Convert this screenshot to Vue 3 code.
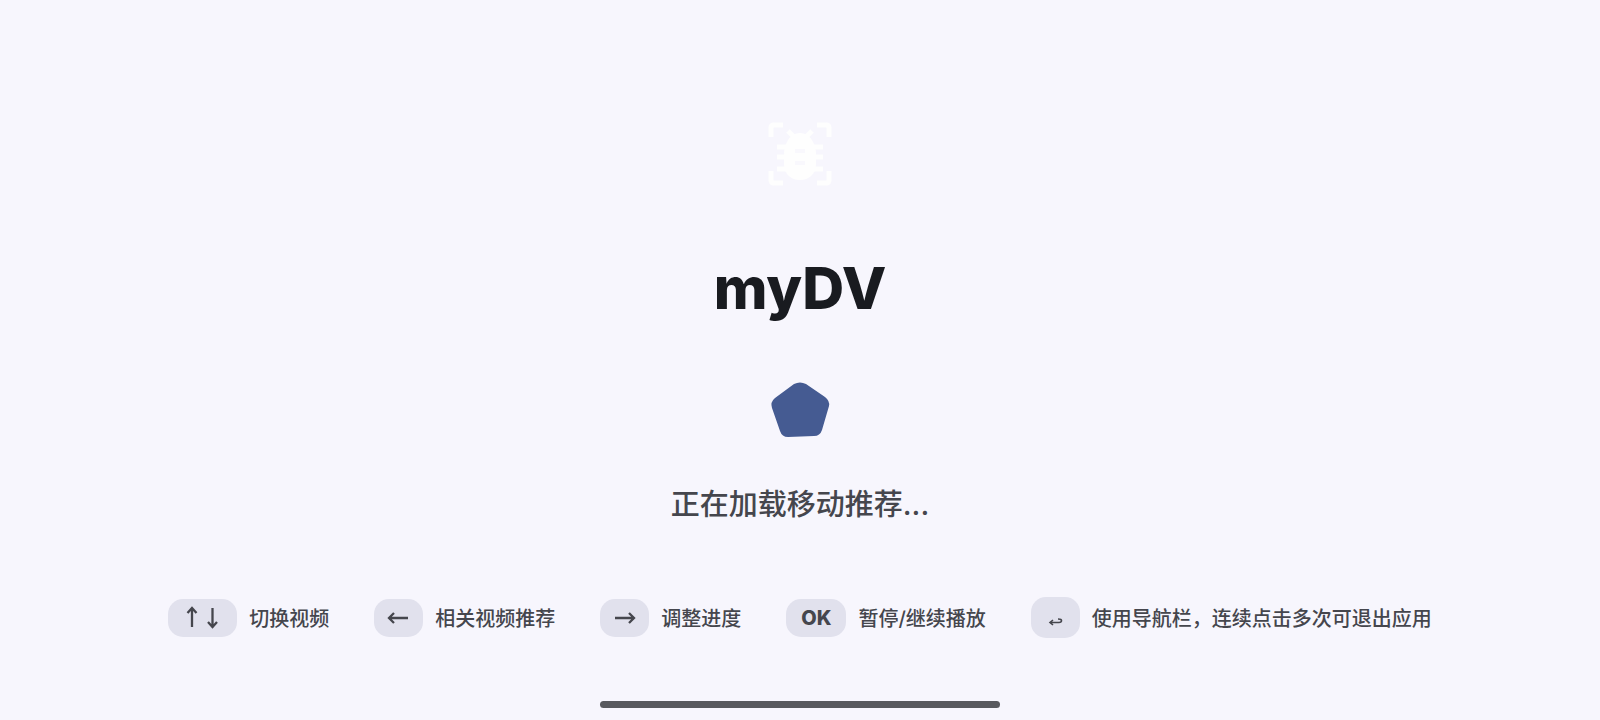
<template>
    <main class="splash">
        <svg class="logo" viewBox="0 0 64 64" aria-hidden="true">
            <path class="frame" d="M3 15V6Q3 3 6 3H15M49 3H58Q61 3 61 6V15M61 49V58Q61 61 58 61H49M15 61H6Q3 61 3 58V49" />
            <path class="legs" d="M9 25H55M9 35H55M9 47H55M20 9L28 17M44 9L36 17" />
            <path class="shell" d="M32 11C38 11 43 15 45 20C47 23 48 27 48 32V42C48 52 41 58 32 58S16 52 16 42V32C16 27 17 23 19 20C21 15 26 11 32 11Z" />
            <path class="slots" d="M27 29H37M27 41H37" />
        </svg>
        <h1 class="title">myDV</h1>
        <svg class="loader" viewBox="0 0 60 60" aria-hidden="true">
            <path d="M24 4Q30 1 36 4L55 17Q60 21 59 26L52 50Q50 56 44 56L18 57Q12 57 10 51L2 28Q0 22 5 18Z" />
        </svg>
        <p class="status">正在加载移动推荐...</p>
        <ul class="hints">
            <li v-for="hint in hints" :key="hint.label" class="hint">
                <kbd class="key">
                    <svg v-if="hint.icon" :width="hint.width" :height="hint.height" aria-hidden="true">
                        <path :d="hint.icon" :stroke-width="hint.stroke" />
                    </svg>
                    <template v-else>{{ hint.key }}</template>
                </kbd>
                <span>{{ hint.label }}</span>
            </li>
        </ul>
        <div class="home-bar"></div>
    </main>
</template>

<script setup>
const hints = [
    {
        icon: "M9 22V3M4.5 8L9 3L13.5 8M29.5 3V22M25 17L29.5 22L34 17",
        width: 39,
        height: 26,
        stroke: 2.3,
        label: "切换视频",
    },
    { icon: "M19 13H0M5 8L0 13L5 18", width: 19, height: 26, stroke: 2.3, label: "相关视频推荐" },
    { icon: "M0 13H19M14 8L19 13L14 18", width: 19, height: 26, stroke: 2.3, label: "调整进度" },
    { key: "OK", label: "暂停/继续播放" },
    {
        icon: "M4 19.5H13Q15.5 19.5 15.5 17.5Q15.5 16 12 16M7 17L4 19.5L7 22",
        width: 19,
        height: 29,
        stroke: 1.6,
        label: "使用导航栏，连续点击多次可退出应用",
    },
];
</script>

<style>
body {
    margin: 0;
    background: #f7f6fd;
}
</style>

<style scoped>
.splash {
    position: relative;
    display: flex;
    flex-direction: column;
    align-items: center;
    justify-content: center;
    box-sizing: border-box;
    min-height: 100vh;
    padding-top: 40px;
    color: #45464d;
    font-family: Inter, "Noto Sans CJK SC", sans-serif;
}

.logo {
    width: 64px;
    height: 64px;
    fill: none;
    stroke: #fefefe;
    stroke-width: 5;
}

.logo .shell {
    fill: #fefefe;
    stroke: none;
}

.logo .slots {
    stroke: #f9f8fd;
    stroke-width: 4;
}

.title {
    margin: 66px 0 56px;
    color: #191b20;
    font-size: 58px;
    font-weight: 800;
    line-height: 72px;
}

.loader {
    width: 60px;
    height: 60px;
    fill: #455b92;
}

.status {
    margin: 45px 0 72px;
    font-size: 29px;
    font-weight: 500;
    line-height: 40px;
}

.hints {
    display: flex;
    align-items: center;
    justify-content: center;
    gap: 45px;
    margin: 0;
    padding: 0;
    list-style: none;
}

.hint {
    display: flex;
    align-items: center;
    gap: 12px;
    font-size: 20px;
    font-weight: 500;
    white-space: nowrap;
}

.key {
    padding: 6px 15px;
    border-radius: 15px;
    background: #e1e1ed;
    font-family: inherit;
    font-size: 20px;
    font-weight: 800;
    line-height: 26px;
}

.key svg {
    display: block;
    overflow: visible;
    fill: none;
    stroke: #45464d;
}

.home-bar {
    position: absolute;
    bottom: 12px;
    left: 50%;
    width: 25%;
    height: 7px;
    border-radius: 4px;
    background: #58595e;
    transform: translateX(-50%);
}
</style>
